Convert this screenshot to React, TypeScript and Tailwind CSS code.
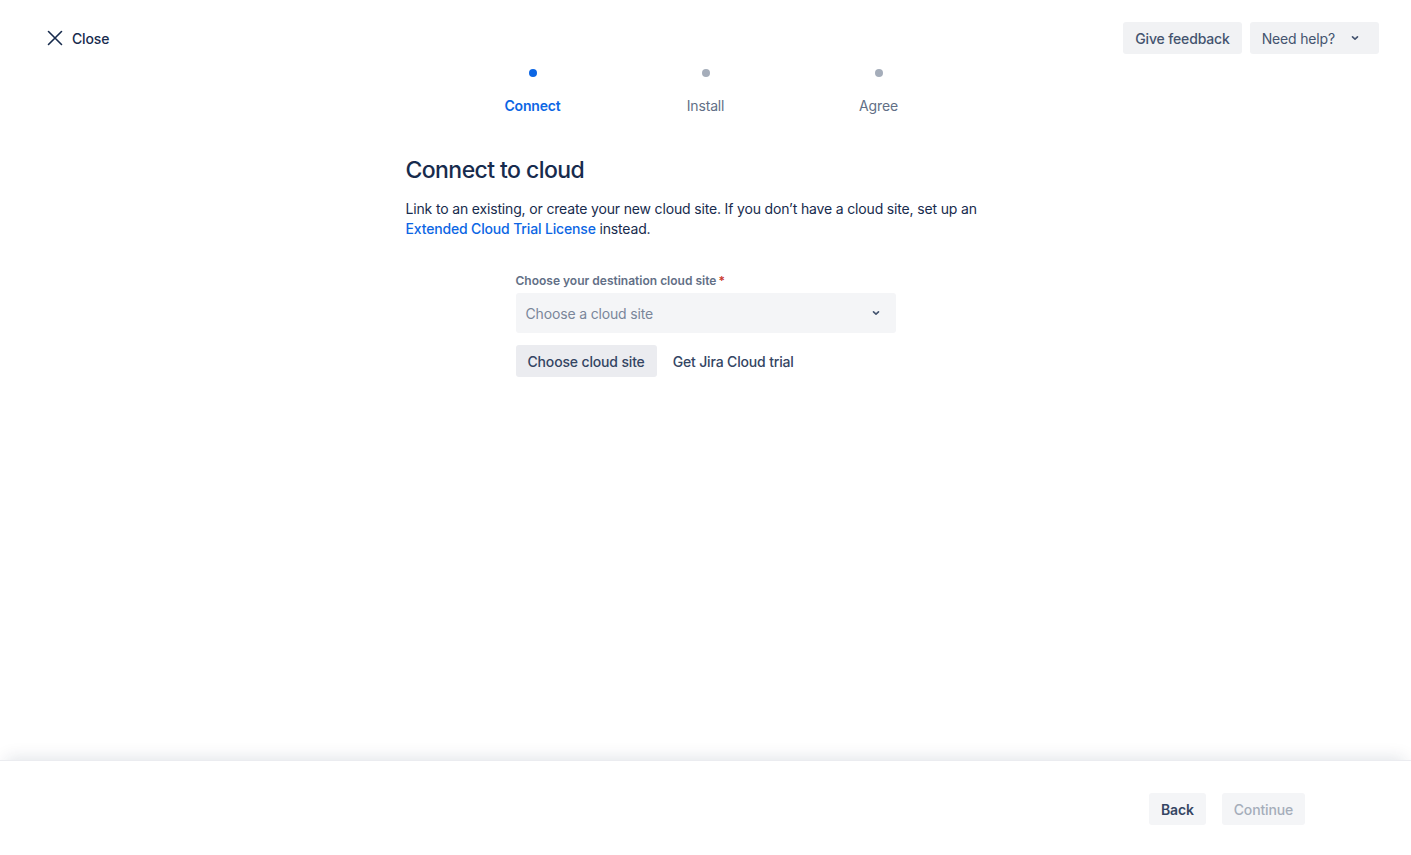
import React from 'react';

const steps = [
  { label: 'Connect', active: true },
  { label: 'Install', active: false },
  { label: 'Agree', active: false },
];

export default function App() {
  return (
    <div
      className="h-[855px] w-full flex flex-col bg-white text-[#172B4D] tracking-[-0.01em]"
      style={{ fontFamily: 'Inter, "Noto Sans", sans-serif' }}
    >
      {/* Top bar */}
      <div className="flex-1 flex flex-col">
        <div className="flex items-start justify-between pl-[46px] pr-[32px] pt-[22px]">
          <button className="flex items-center gap-[8px] h-[32px] text-[14px] font-medium text-[#172B4D]">
            <svg width="18" height="18" viewBox="0 0 18 18" fill="none">
              <path d="M2.5 2.5l13 13M15.5 2.5l-13 13" stroke="#172B4D" strokeWidth="1.6" strokeLinecap="round" />
            </svg>
            <span>Close</span>
          </button>
          <div className="flex items-center gap-[8px]">
            <button className="h-[32px] px-[12px] rounded-[3px] bg-[#F1F2F4] text-[14px] font-medium text-[#44546F]">
              Give feedback
            </button>
            <button className="h-[32px] pl-[12px] pr-[18px] rounded-[3px] bg-[#F1F2F4] text-[14px] text-[#44546F] flex items-center gap-[14px]">
              <span>Need help?</span>
              <svg width="12" height="12" viewBox="0 0 12 12" fill="none">
                <path d="M3.5 4.8L6 7.2l2.5-2.4" stroke="#44546F" strokeWidth="1.6" strokeLinecap="round" strokeLinejoin="round" />
              </svg>
            </button>
          </div>
        </div>

        {/* Stepper */}
        <div className="flex justify-center mt-[11px]">
          {steps.map((s) => (
            <div key={s.label} className="w-[173px] flex flex-col items-center">
              <div className="h-[16px] flex items-center">
                <div
                  className={`w-[8px] h-[8px] rounded-full ${s.active ? 'bg-[#0C66E4]' : 'bg-[#A5ADBA]'}`}
                />
              </div>
              <div
                className={`mt-[15px] text-[14px] leading-[20px] ${
                  s.active ? 'text-[#0C66E4] font-semibold' : 'text-[#626F86]'
                }`}
              >
                {s.label}
              </div>
            </div>
          ))}
        </div>

        {/* Content */}
        <div className="w-[600px] mx-auto mt-[38px]">
          <h1 className="text-[23px] leading-[32px] font-medium tracking-[-0.025em] text-[#172B4D]">
            Connect to cloud
          </h1>
          <p className="mt-[13px] text-[14px] leading-[20px] text-[#172B4D]">
            Link to an existing, or create your new cloud site. If you don’t have a cloud site, set up an{' '}
            <a className="text-[#0C66E4] font-medium">Extended Cloud Trial License</a> instead.
          </p>

          <div className="w-[380px] mx-auto mt-[34px]">
            <label className="block text-[12px] leading-[16px] font-semibold tracking-normal text-[#626F86]">
              Choose your destination cloud site<span className="text-[#C9372C] ml-[2px]">*</span>
            </label>
            <div className="mt-[4px] h-[40px] rounded-[3px] bg-[#F4F5F7] flex items-center justify-between pl-[10px] pr-[14px]">
              <span className="text-[14px] text-[#7A869A]">Choose a cloud site</span>
              <svg width="12" height="12" viewBox="0 0 12 12" fill="none">
                <path d="M3.5 4.8L6 7.2l2.5-2.4" stroke="#44546F" strokeWidth="1.6" strokeLinecap="round" strokeLinejoin="round" />
              </svg>
            </div>
            <div className="mt-[12px] flex items-center gap-[4px]">
              <button className="h-[32px] px-[12px] rounded-[3px] bg-[#EBECF0] text-[14px] font-medium text-[#344563]">
                Choose cloud site
              </button>
              <button className="h-[32px] px-[12px] text-[14px] font-medium text-[#344563]">
                Get Jira Cloud trial
              </button>
            </div>
          </div>
        </div>
      </div>

      {/* Footer */}
      <div className="h-[95px] shrink-0 bg-white shadow-[0_-8px_16px_-6px_rgba(9,30,66,0.12)] border-t border-[#EBECF0] flex items-start justify-end pt-[32px] pr-[106px] gap-[16px]">
        <button className="h-[32px] px-[12px] rounded-[3px] bg-[#F4F5F7] text-[14px] font-semibold text-[#344563]">
          Back
        </button>
        <button className="h-[32px] px-[12px] rounded-[3px] bg-[#F4F5F7] text-[14px] font-medium text-[#A5ADBA]">
          Continue
        </button>
      </div>
    </div>
  );
}
